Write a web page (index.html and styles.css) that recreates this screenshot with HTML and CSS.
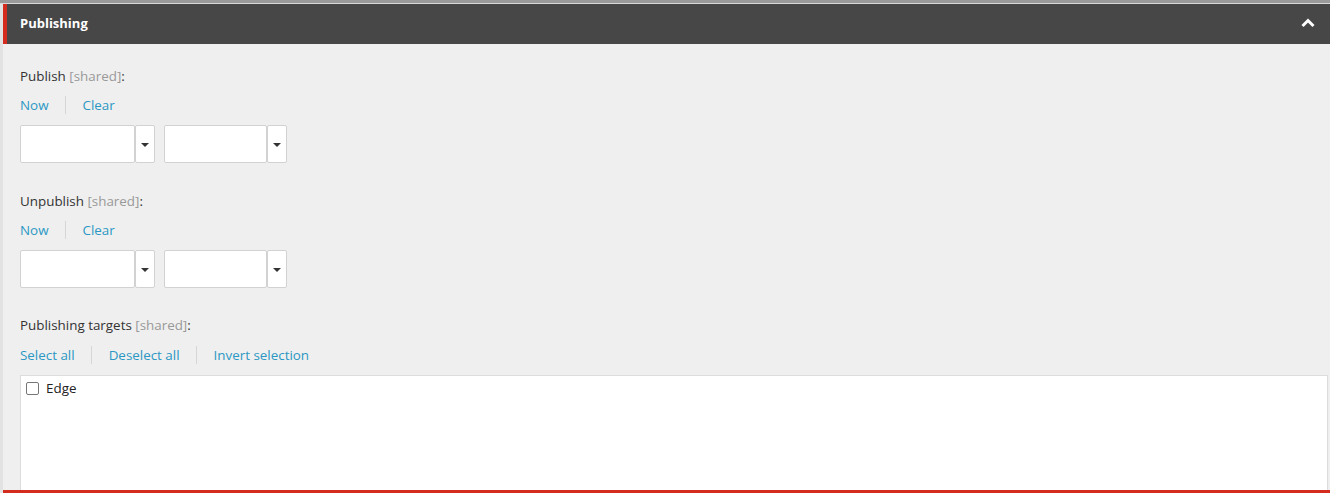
FILE: index.html
```html
<!DOCTYPE html>
<html>
<head>
<meta charset="utf-8">
<link rel="stylesheet" href="styles.css">
</head>
<body>
<div class="topbar"></div>
<div class="panel">
  <div class="section-header">
    <span class="section-title">Publishing</span>
    <svg class="chevron" width="14" height="10" viewBox="0 0 14 10"><path d="M1.5 8 L7 2.5 L12.5 8" fill="none" stroke="#fff" stroke-width="3"/></svg>
  </div>
  <div class="section-body">
    <div class="field-label">Publish <span class="shared">[shared]</span>:</div>
    <div class="links">
      <a class="link">Now</a><span class="sep"></span><a class="link">Clear</a>
    </div>
    <div class="pickers">
      <div class="picker date"><div class="picker-input"></div><div class="picker-btn"><span class="caret"></span></div></div>
      <div class="picker time"><div class="picker-input"></div><div class="picker-btn"><span class="caret"></span></div></div>
    </div>

    <div class="field-label gap">Unpublish <span class="shared">[shared]</span>:</div>
    <div class="links">
      <a class="link">Now</a><span class="sep"></span><a class="link">Clear</a>
    </div>
    <div class="pickers">
      <div class="picker date"><div class="picker-input"></div><div class="picker-btn"><span class="caret"></span></div></div>
      <div class="picker time"><div class="picker-input"></div><div class="picker-btn"><span class="caret"></span></div></div>
    </div>

    <div class="field-label gap2">Publishing targets <span class="shared">[shared]</span>:</div>
    <div class="links tight">
      <a class="link">Select all</a><span class="sep"></span><a class="link">Deselect all</a><span class="sep"></span><a class="link">Invert selection</a>
    </div>
    <div class="targets">
      <label class="target"><span class="checkbox"></span>Edge</label>
    </div>
  </div>
  <div class="next-header"></div>
</div>
</body>
</html>
```
FILE: styles.css
```css
html, body {
  margin: 0;
  padding: 0;
  height: 493px;
  overflow: hidden;
  background: #efefef;
  font-family: "Open Sans", "Liberation Sans", sans-serif;
  font-size: 13.4px;
  color: #333;
}
.topbar {
  height: 3px;
  background: #9a9a9a;
  border-bottom: 1px solid #d8d8d8;
}
.panel {
  border-left: 3px solid #e2e2e2;
}
.section-header {
  height: 40px;
  background: #474747;
  border-left: 4px solid #d42b1f;
  display: flex;
  align-items: center;
  justify-content: space-between;
  padding: 0 15px 0 13px;
}
.section-title {
  color: #fff;
  font-weight: 700;
  font-size: 13px;
  margin-top: -3px;
}
.chevron {
  display: block;
  margin-top: -2px;
}
.section-body {
  padding: 23px 2px 0 17px;
}
.field-label {
  line-height: 18px;
  height: 18px;
  color: #333;
}
.field-label.gap {
  margin-top: 29px;
}
.field-label.gap2 {
  margin-top: 28px;
}
.shared {
  color: #999;
}
.links {
  display: flex;
  align-items: center;
  margin-top: 11px;
  height: 18px;
  line-height: 18px;
}
.links.tight {
  margin-top: 12px;
}
.link {
  color: #2b98c4;
  cursor: pointer;
}
.sep {
  width: 1px;
  height: 18px;
  background: #d6d6d6;
  margin: 0 17px 0 16px;
}
.pickers {
  display: flex;
  gap: 9px;
  margin-top: 11px;
}
.picker {
  display: flex;
  height: 38px;
}
.picker.date .picker-input { width: 115px; }
.picker.time .picker-input { width: 103px; }
.picker-input {
  background: #fff;
  border: 1px solid #d2d2d2;
  border-radius: 2px;
  box-sizing: border-box;
}
.picker-btn {
  width: 20px;
  background: #fff;
  border: 1px solid #d2d2d2;
  border-radius: 2px;
  box-sizing: border-box;
  display: flex;
  align-items: center;
  justify-content: center;
}
.caret {
  width: 0;
  height: 0;
  border-left: 4px solid transparent;
  border-right: 4px solid transparent;
  border-top: 4px solid #333;
  margin-top: 1px;
}
.targets {
  margin-top: 11px;
  height: 115px;
  background: #fff;
  border: 1px solid #dcdcdc;
  border-bottom: none;
  box-sizing: border-box;
  padding: 3px 6px 0 5px;
}
.target {
  display: flex;
  align-items: center;
  gap: 7px;
  line-height: 18px;
  color: #222;
}
.checkbox {
  width: 11px;
  height: 11px;
  border: 1px solid #777;
  border-radius: 2px;
  background: #fff;
}
.next-header {
  height: 3px;
  background: #d42b1f;
  border-bottom: 20px solid #474747;
}
```
